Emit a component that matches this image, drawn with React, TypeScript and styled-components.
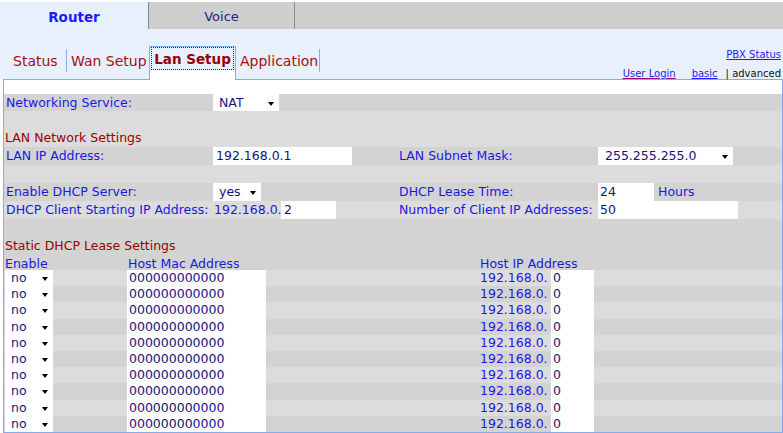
import React from 'react'
import styled, { createGlobalStyle } from 'styled-components'

const GlobalStyle = createGlobalStyle`
  html, body {
    margin: 0;
    padding: 0;
    background: #ffffff;
  }
  body {
    font-family: "DejaVu Sans", Verdana, sans-serif;
    font-size: 12.5px;
    overflow: hidden;
  }
`

const LIGHT_BLUE = '#e8f0fd'
const EDGE_BLUE = '#86aceb'
const DARK_ROW = '#d3d3d3'
const LIGHT_ROW = '#dcdcdc'
const LABEL = '#1818e0'
const VALUE = '#141480'
const HEAD_RED = '#990000'

const Page = styled.div`
  width: 783px;
  padding-top: 2px;
`

const TopBar = styled.div`
  display: flex;
  height: 27px;
  background: #cfcfcf;
`
const MainTab = styled.div<{ $active?: boolean }>`
  display: flex;
  align-items: center;
  justify-content: center;
  box-sizing: border-box;
  width: ${p => (p.$active ? '148px' : '147px')};
  padding-top: 2px;
  background: ${p => (p.$active ? LIGHT_BLUE : '#cfcfcf')};
  color: ${p => (p.$active ? '#1a1aff' : '#1e1e80')};
  font-weight: ${p => (p.$active ? 'bold' : 'normal')};
  font-size: ${p => (p.$active ? '13.5px' : '13px')};
  ${p => (p.$active ? '' : 'border-left: 1px solid #8a8a8a; border-right: 1px solid #8a8a8a;')}
`

const SubBar = styled.div`
  display: flex;
  justify-content: space-between;
  align-items: flex-end;
  height: 50px;
  background: ${LIGHT_BLUE};
`
const SubTabs = styled.div`
  display: flex;
  align-items: flex-end;
  padding-left: 9px;
`
const SubTab = styled.div<{ $sep?: boolean; $w: number }>`
  display: flex;
  align-items: center;
  box-sizing: border-box;
  width: ${p => p.$w}px;
  height: 23px;
  margin-bottom: 7px;
  padding-left: 4px;
  color: #a40e0e;
  font-size: 14px;
  white-space: nowrap;
  border-right: ${p => (p.$sep ? `1px solid ${EDGE_BLUE}` : 'none')};
`
const ActiveTab = styled.div`
  position: relative;
  z-index: 1;
  box-sizing: border-box;
  width: 87px;
  height: 34px;
  margin-bottom: -1px;
  padding: 1px 2px 0;
  border: 1px solid ${EDGE_BLUE};
  border-bottom: none;
  background: linear-gradient(${LIGHT_BLUE} 0, ${LIGHT_BLUE} 23px, #ffffff 23px);
`
const FocusLabel = styled.span`
  display: flex;
  align-items: center;
  justify-content: center;
  height: 21px;
  padding-top: 1px;
  box-sizing: border-box;
  outline: 1px dotted #7a0000;
  color: ${HEAD_RED};
  font-weight: bold;
  font-size: 13.5px;
`

const Links = styled.div`
  display: flex;
  flex-direction: column;
  align-items: flex-end;
  gap: 7px;
  padding-right: 2px;
  font-size: 10px;
`
const LinkLine = styled.div`
  display: flex;
  align-items: center;
  gap: 16px;
  height: 12px;
`
const Link = styled.a<{ $visited?: boolean }>`
  color: #1a1aff;
  text-decoration: underline;
  text-decoration-color: ${p => (p.$visited ? '#99006e' : '#1a1aff')};
  cursor: pointer;
`
const Plain = styled.span`
  color: #111111;
  margin-left: -8px;
`

const Panel = styled.div`
  box-sizing: border-box;
  width: 780px;
  margin-left: 3px;
  padding-top: 14px;
  border: 1px solid ${EDGE_BLUE};
  background: #ffffff;
`

const FormRow = styled.div<{ $dark?: boolean; $h?: number }>`
  display: grid;
  grid-template-columns: 209px 184px 201px 1fr;
  align-items: stretch;
  height: ${p => p.$h ?? 18}px;
  background: ${p => (p.$dark ? DARK_ROW : LIGHT_ROW)};
  line-height: 16px;
`
const Label = styled.div`
  display: flex;
  align-items: center;
  padding-left: 2px;
  color: ${LABEL};
  white-space: nowrap;
`
const SectionTitle = styled.div`
  display: flex;
  align-items: center;
  padding-left: 1px;
  color: ${HEAD_RED};
`
const Cell = styled.div`
  display: flex;
  align-items: stretch;
  color: ${LABEL};
`
const Input = styled.div<{ $w: number; $pad?: number }>`
  display: flex;
  align-items: center;
  box-sizing: border-box;
  width: ${p => p.$w}px;
  padding-left: ${p => p.$pad ?? 3}px;
  background: #ffffff;
  color: ${VALUE};
`
const Select = styled.div<{ $w: number; $pad?: number }>`
  display: flex;
  align-items: center;
  justify-content: space-between;
  box-sizing: border-box;
  width: ${p => p.$w}px;
  padding: 0 5px 0 ${p => p.$pad ?? 6}px;
  background: #ffffff;
  color: ${VALUE};
`
const Arrow = styled.span`
  width: 0;
  height: 0;
  margin-top: 2px;
  border-top: 4px solid #000000;
  border-left: 3.5px solid transparent;
  border-right: 3.5px solid transparent;
`
const Prefix = styled.span`
  display: flex;
  align-items: center;
  padding-left: 1px;
  width: 67px;
  color: ${LABEL};
`
const Unit = styled.span`
  display: flex;
  align-items: center;
  padding-left: 4px;
  color: ${LABEL};
`

const LeaseGrid = styled.div<{ $dark?: boolean; $h: number }>`
  display: grid;
  grid-template-columns: 123px 353px 71px 43px 1fr;
  height: ${p => p.$h}px;
  background: ${p => (p.$dark ? DARK_ROW : LIGHT_ROW)};
  line-height: 16px;
`
const ColHead = styled.div<{ $shift?: number }>`
  display: flex;
  align-items: center;
  padding-left: ${p => p.$shift ?? 1}px;
  padding-top: 1px;
  color: ${LABEL};
  white-space: nowrap;
`
const IpPrefix = styled.div`
  display: flex;
  align-items: center;
  color: ${LABEL};
`

const Select2 = styled(Select)`
  margin-left: 1px;
`

const leaseRows = Array.from({ length: 10 }, (_, i) => i)

const App = () => (
  <Page>
    <GlobalStyle />
    <TopBar>
      <MainTab $active>Router</MainTab>
      <MainTab>Voice</MainTab>
    </TopBar>

    <SubBar>
      <SubTabs>
        <SubTab $sep $w={58}>Status</SubTab>
        <SubTab $w={82}>Wan Setup</SubTab>
        <ActiveTab>
          <FocusLabel>Lan Setup</FocusLabel>
        </ActiveTab>
        <SubTab $sep $w={84}>Application</SubTab>
      </SubTabs>
      <Links>
        <LinkLine>
          <Link>PBX Status</Link>
        </LinkLine>
        <LinkLine>
          <Link $visited>User Login</Link>
          <Link>basic</Link>
          <Plain>| advanced</Plain>
        </LinkLine>
      </Links>
    </SubBar>

    <Panel>
      <FormRow $dark $h={17}>
        <Label>Networking Service:</Label>
        <Cell>
          <Select $w={66}>NAT<Arrow /></Select>
        </Cell>
      </FormRow>
      <FormRow />
      <FormRow>
        <SectionTitle>LAN Network Settings</SectionTitle>
      </FormRow>
      <FormRow $dark>
        <Label>LAN IP Address:</Label>
        <Cell>
          <Input $w={139}>192.168.0.1</Input>
        </Cell>
        <Label>LAN Subnet Mask:</Label>
        <Cell>
          <Select $w={135} $pad={7}>255.255.255.0<Arrow /></Select>
        </Cell>
      </FormRow>
      <FormRow />
      <FormRow $dark>
        <Label>Enable DHCP Server:</Label>
        <Cell>
          <Select $w={48}>yes<Arrow /></Select>
        </Cell>
        <Label>DHCP Lease Time:</Label>
        <Cell>
          <Input $w={56} $pad={2}>24</Input>
          <Unit>Hours</Unit>
        </Cell>
      </FormRow>
      <FormRow>
        <Label>DHCP Client Starting IP Address:</Label>
        <Cell>
          <Prefix>192.168.0.</Prefix>
          <Input $w={55} $pad={3}>2</Input>
        </Cell>
        <Label>Number of Client IP Addresses:</Label>
        <Cell>
          <Input $w={140} $pad={2}>50</Input>
        </Cell>
      </FormRow>
      <FormRow $dark />
      <FormRow $dark>
        <SectionTitle>Static DHCP Lease Settings</SectionTitle>
      </FormRow>

      <LeaseGrid $dark $h={15}>
        <ColHead>Enable</ColHead>
        <ColHead>Host Mac Address</ColHead>
        <ColHead $shift={0}>Host IP Address</ColHead>
      </LeaseGrid>
      {leaseRows.map(i => (
        <LeaseGrid key={i} $dark={i % 2 === 1} $h={16.2}>
          <Cell>
            <Select2 $w={48} $pad={6}>no<Arrow /></Select2>
          </Cell>
          <Cell>
            <Input $w={139} $pad={2}>000000000000</Input>
          </Cell>
          <IpPrefix>192.168.0.</IpPrefix>
          <Cell>
            <Input $w={43} $pad={2}>0</Input>
          </Cell>
        </LeaseGrid>
      ))}
    </Panel>
  </Page>
)

export default App
